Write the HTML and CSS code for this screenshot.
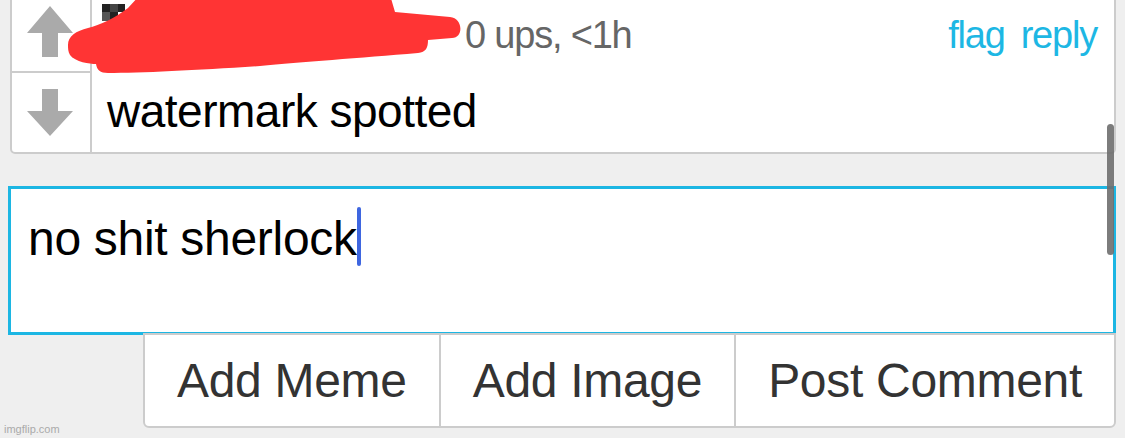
FILE: index.html
```html
<!DOCTYPE html>
<html lang="en">
<head>
<meta charset="utf-8">
<title>Comment reply</title>
<link rel="stylesheet" href="styles.css">
</head>
<body>
<div class="page">
  <div class="comment">
    <div class="votes">
      <div class="vote vote-up">
        <svg class="arrow" width="46" height="51" viewBox="0 0 46 51"><polygon points="23,0 46,27 31,27 31,51 15,51 15,27 0,27"/></svg>
      </div>
      <div class="vote vote-down">
        <svg class="arrow" width="46" height="47" viewBox="0 0 46 47"><polygon points="15,0 31,0 31,22 46,22 23,47 0,22 15,22"/></svg>
      </div>
    </div>
    <div class="comment-main">
      <div class="meta">
        <span class="author"></span>
        <span class="ups">0 ups, &lt;1h</span>
        <span class="links"><a>flag</a><a>reply</a></span>
      </div>
      <div class="comment-text">watermark spotted</div>
    </div>
  </div>
  <div class="reply-box">no shit sherlock<span class="caret"></span></div>
  <div class="reply-actions">
    <div class="btn-group">
      <button class="btn">Add Meme</button>
      <button class="btn">Add Image</button>
      <button class="btn">Post Comment</button>
    </div>
  </div>
</div>
<svg class="redact" width="480" height="80" viewBox="0 0 480 80">
  <rect x="102" y="4" width="8" height="8" fill="#222"/>
  <rect x="110" y="4" width="8" height="8" fill="#444"/>
  <rect x="118" y="4" width="7" height="8" fill="#222"/>
  <rect x="102" y="12" width="8" height="9" fill="#555"/>
  <rect x="110" y="12" width="8" height="9" fill="#222"/>
  <rect x="424" y="44" width="3" height="3" fill="#777"/>
  <path fill="#ff3434" d="M 68 45 C 68 36, 76 31, 88 28 C 100 25, 115 18, 128 8 L 140 -5 L 390 -5 L 395 12 L 450 17 C 463 18, 464 38, 452 38 L 428 40 C 428 48, 426 52, 418 53 C 360 58, 300 62, 260 66 C 200 70, 140 73, 108 73 C 100 73, 97 70, 96 64 C 90 64, 75 62, 70 55 C 68 52, 68 48, 68 45 Z"/>
</svg>
<div class="scrollbar"></div>
<div class="watermark">imgflip.com</div>
</body>
</html>
```

FILE: styles.css
```css
html, body {
  margin: 0;
  padding: 0;
}

body {
  background: #efefef;
  font-family: "Liberation Sans", Arial, Helvetica, sans-serif;
  height: 438px;
  overflow: hidden;
  position: relative;
}

.page {
  padding: 0 9px 0 8px;
}

.comment {
  margin: -10px 0 0 2px;
  display: flex;
  background: #fff;
  border: 2px solid #cccccc;
  border-radius: 0 0 5px 5px;
}

.votes {
  flex: none;
  width: 78px;
  border-right: 2px solid #cccccc;
  display: flex;
  flex-direction: column;
}

.vote {
  height: 79px;
  display: flex;
  align-items: center;
  justify-content: center;
}

.vote-down {
  border-top: 2px solid #cccccc;
}

.arrow {
  fill: #aaaaaa;
  margin-right: 2px;
}

.comment-main {
  flex: 1;
  min-width: 0;
}

.meta {
  height: 79px;
  box-sizing: border-box;
  padding: 24px 17px 0 15px;
  display: flex;
  align-items: baseline;
  font-size: 38px;
  line-height: 1;
  letter-spacing: -1.2px;
}

.author {
  flex: none;
  width: 358px;
}

.ups {
  color: #666666;
}

.links {
  margin-left: auto;
  display: flex;
  gap: 16px;
  color: #1db7e4;
}

.comment-text {
  height: 81px;
  box-sizing: border-box;
  padding: 17px 15px 0;
  font-size: 46px;
  line-height: 1;
  letter-spacing: -0.5px;
  color: #000;
}

.reply-box {
  margin-top: 32px;
  height: 149px;
  box-sizing: border-box;
  border: 3px solid #1cb6e3;
  background: #fff;
  padding: 18px 17px 0;
  font-size: 48px;
  line-height: 1.2;
  letter-spacing: -0.3px;
  color: #000;
}

.caret {
  display: inline-block;
  width: 4px;
  height: 59px;
  background: #3e66e0;
  border-radius: 2px;
  vertical-align: -11px;
}

.reply-actions {
  display: flex;
  justify-content: flex-end;
  margin-top: -2px;
}

.btn-group {
  display: flex;
  background: #fff;
  border: 2px solid #cccccc;
  border-radius: 0 0 6px 6px;
}

.btn {
  font-family: inherit;
  font-size: 48px;
  letter-spacing: -0.3px;
  color: #333333;
  background: none;
  border: 0;
  border-left: 2px solid #cccccc;
  padding: 0 32px;
  height: 91px;
  margin: 0;
}

.btn:first-child {
  border-left: 0;
}

.redact {
  position: absolute;
  left: 0;
  top: 0;
}

.scrollbar {
  position: absolute;
  left: 1107px;
  top: 124px;
  width: 7px;
  height: 131px;
  border-radius: 4px;
  background: rgba(110, 110, 110, 0.9);
}

.watermark {
  position: absolute;
  left: 4px;
  bottom: 3px;
  font-size: 11px;
  color: #aaaaaa;
}
```
